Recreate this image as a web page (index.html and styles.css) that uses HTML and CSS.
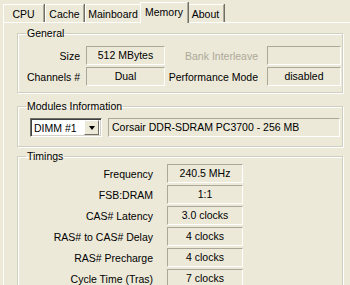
FILE: index.html
```html
<!DOCTYPE html>
<html>
<head>
    <meta charset="utf-8">
    <title>CPU-Z Memory</title>
    <link rel="stylesheet" href="styles.css">
</head>
<body>
    <div class="tabs">
        <div class="tab w-cpu">CPU</div>
        <div class="tab w-cache">Cache</div>
        <div class="tab w-main">Mainboard</div>
        <div class="tab w-mem active">Memory</div>
        <div class="tab w-about">About</div>
    </div>
    <div class="panel">
        <fieldset class="group general">
            <legend>General</legend>
            <div class="row">
                <span class="lbl lbl-a">Size</span>
                <span class="field f-a">512 MBytes</span>
                <span class="lbl lbl-b off">Bank Interleave</span>
                <span class="field f-b"></span>
            </div>
            <div class="row">
                <span class="lbl lbl-a">Channels #</span>
                <span class="field f-a">Dual</span>
                <span class="lbl lbl-b">Performance Mode</span>
                <span class="field f-b">disabled</span>
            </div>
        </fieldset>

        <fieldset class="group modules">
            <legend>Modules Information</legend>
            <div class="row">
                <div class="combo">
                    <span class="combo-text">DIMM #1</span>
                    <span class="combo-btn"><i class="arrow"></i></span>
                </div>
                <span class="field f-part">Corsair DDR-SDRAM PC3700 - 256 MB</span>
            </div>
        </fieldset>

        <fieldset class="group timings">
            <legend>Timings</legend>
            <div class="row"><span class="lbl lbl-t">Frequency</span><span class="field f-t">240.5 MHz</span></div>
            <div class="row"><span class="lbl lbl-t">FSB:DRAM</span><span class="field f-t">1:1</span></div>
            <div class="row"><span class="lbl lbl-t">CAS# Latency</span><span class="field f-t">3.0 clocks</span></div>
            <div class="row"><span class="lbl lbl-t">RAS# to CAS# Delay</span><span class="field f-t">4 clocks</span></div>
            <div class="row"><span class="lbl lbl-t">RAS# Precharge</span><span class="field f-t">4 clocks</span></div>
            <div class="row"><span class="lbl lbl-t">Cycle Time (Tras)</span><span class="field f-t">7 clocks</span></div>
        </fieldset>
    </div>
</body>
</html>
```

FILE: styles.css
```css
body,html{padding:0;margin:0;}
body{
	background:#ECE9D8;
	font-family:"Liberation Sans",Arial,sans-serif;
	font-size:10.5px;
	color:#000;
	overflow:hidden;
	height:285px;
}

/* tab strip */
.tabs{display:flex;align-items:flex-end;height:22px;padding-left:3px;}
.tab{
	box-sizing:border-box;
	height:18px;
	line-height:19px;
	text-align:center;
	border-top:1px solid #fff;
	border-left:1px solid #fff;
	border-right:1px solid #ACA899;
	box-shadow:1px 0 0 #716F64;
	margin-right:1px;
}
.tab.active{
	height:21px;
	line-height:19px;
	margin:0 -1px -1px -2px;
	padding:0 2px;
	position:relative;
	background:#ECE9D8;
}
.w-cpu{width:41px;}
.w-cache{width:39px;}
.w-main{width:56px;}
.w-mem{width:48px;}
.w-about{width:37px;}

.panel{
	margin-left:3px;
	border-top:1px solid #fff;
	border-left:1px solid #fff;
	height:262px;
	overflow:hidden;
}

/* group boxes */
.group{
	box-sizing:border-box;
	width:326px;
	margin:0 0 0 13px;
	padding:0;
	border:1px solid #D0CEBF;
	box-shadow:inset 1px 1px 0 #fff,1px 1px 0 #fff;
}
.group legend{
	margin-left:8px;
	padding:0 1px;
	line-height:13px;
}
.general{margin-top:4px;padding:6px 0 6px 0;}
.modules{margin-top:7px;padding:5px 0 9px 0;}
.timings{margin-top:3px;padding:1px 0 20px 0;}

.row{display:flex;align-items:center;height:19px;margin-bottom:2px;}
.row:last-child{margin-bottom:0;}

.lbl{text-align:right;white-space:nowrap;}
.lbl-a{width:62px;margin-right:6px;}
.lbl-b{width:93px;margin-right:9px;}
.lbl-t{width:135px;margin-right:14px;}
.off{color:#ACA899;}

.field{
	box-sizing:border-box;
	height:19px;
	line-height:17px;
	text-align:center;
	border-top:1px solid #ACA899;
	border-left:1px solid #ACA899;
	border-bottom:1px solid #fff;
	border-right:1px solid #fff;
	white-space:nowrap;
}
.f-a{width:79px;}
.f-b{width:74px;}
.f-t{width:76px;}
.f-part{width:232px;margin-left:6px;text-align:left;padding-left:3px;}

/* combo box */
.combo{
	box-sizing:border-box;
	display:flex;
	align-items:center;
	width:72px;
	height:19px;
	margin-left:12px;
	background:#fff;
	border-top:1px solid #716F64;
	border-left:1px solid #716F64;
	border-bottom:1px solid #fff;
	border-right:1px solid #fff;
	box-shadow:inset 1px 1px 0 #404040,inset -1px -1px 0 #D4D0C8;
	padding:2px;
}
.combo-text{flex:1;padding-left:1px;}
.combo-btn{
	box-sizing:border-box;
	width:15px;
	height:15px;
	background:#ECE9D8;
	border-top:1px solid #fff;
	border-left:1px solid #fff;
	border-bottom:1px solid #716F64;
	border-right:1px solid #716F64;
	display:flex;
	align-items:center;
	justify-content:center;
}
.arrow{
	width:0;height:0;
	border-left:3.5px solid transparent;
	border-right:3.5px solid transparent;
	border-top:4px solid #000;
}
```
